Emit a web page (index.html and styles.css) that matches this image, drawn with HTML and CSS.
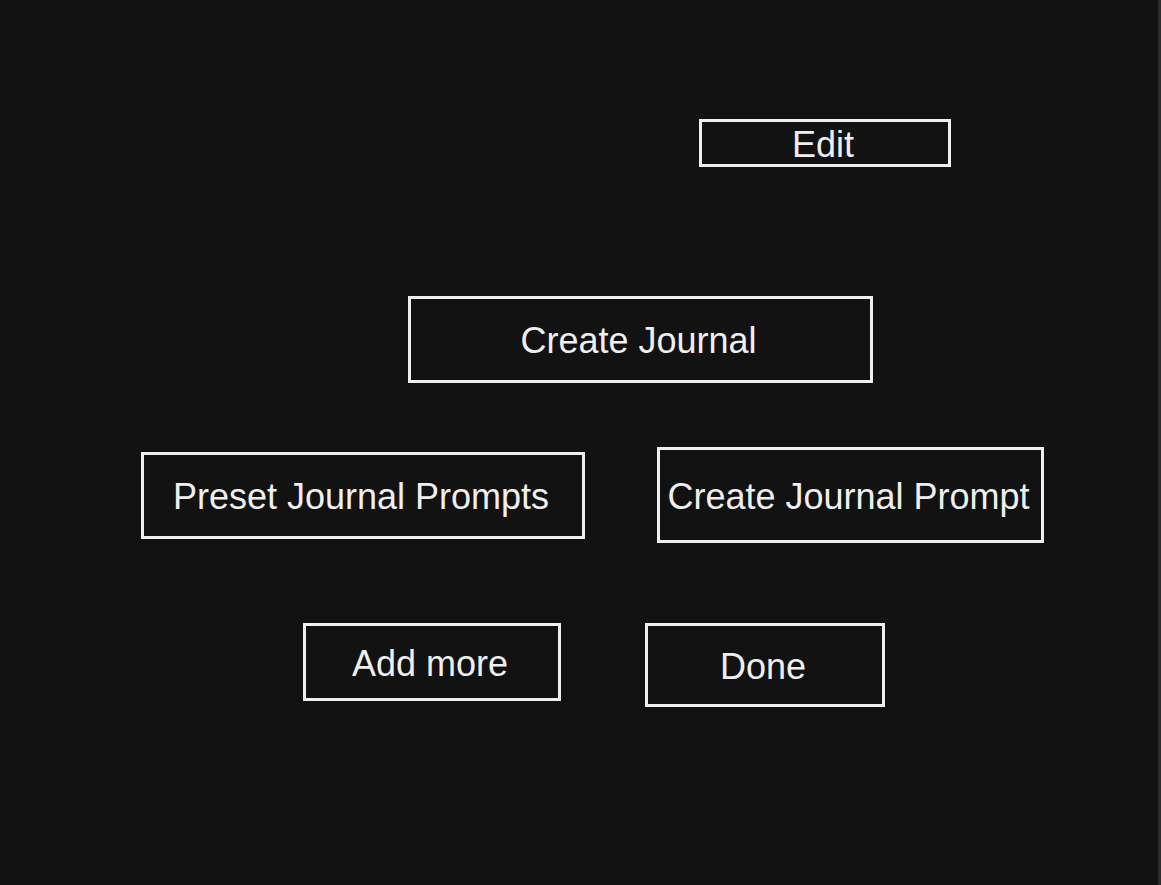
FILE: index.html
```html
<!DOCTYPE html>
<html lang="en">
<head>
  <meta charset="utf-8">
  <meta name="viewport" content="width=device-width, initial-scale=1">
  <title>Journal</title>
  <link rel="stylesheet" href="styles.css">
</head>
<body>
  <main class="board">
    <div class="row row-edit">
      <button type="button" class="action action-slim">Edit</button>
    </div>
    <div class="row row-create">
      <button type="button" class="action action-wide">Create Journal</button>
    </div>
    <div class="row row-prompts">
      <button type="button" class="action action-wide">Preset Journal Prompts</button>
      <button type="button" class="action action-tall">Create Journal Prompt</button>
    </div>
    <div class="row row-finish">
      <button type="button" class="action action-add">Add more</button>
      <button type="button" class="action action-done">Done</button>
    </div>
  </main>
</body>
</html>
```

FILE: styles.css
```css
* {
  box-sizing: border-box;
}

body {
  margin: 0;
  background: #121212;
  font-family: "Liberation Sans", Arial, sans-serif;
}

.board {
  display: flex;
  flex-direction: column;
  min-height: 100vh;
  padding: 119px 0 48px;
  border-right: 3px solid #2c2c2c;
}

.row {
  display: grid;
}

.row-edit {
  grid-template-columns: 699fr 252fr 207fr;
  margin-bottom: 129px;
}

.row-create {
  grid-template-columns: 408fr 465fr 285fr;
  margin-bottom: 64px;
}

.row-prompts {
  grid-template-columns: 141fr 444fr 72fr 387fr 114fr;
  align-items: center;
  margin-bottom: 80px;
}

.row-finish {
  grid-template-columns: 303fr 258fr 84fr 240fr 273fr;
  align-items: start;
}

.action {
  grid-column: 2;
  min-width: 0;
  padding: 3px 4px 0 0;
  border: 3px solid #efefee;
  border-radius: 0;
  background: transparent;
  color: #efefef;
  font-family: inherit;
  font-size: 36px;
  line-height: 38px;
  white-space: nowrap;
  cursor: pointer;
}

.action + .action {
  grid-column: 4;
}

.action:hover {
  background: #222222;
}

.action-slim {
  min-height: 48px;
}

.action-wide {
  min-height: 87px;
}

.action-tall {
  min-height: 96px;
}

.action-add {
  min-height: 78px;
}

.action-done {
  min-height: 84px;
}
```
